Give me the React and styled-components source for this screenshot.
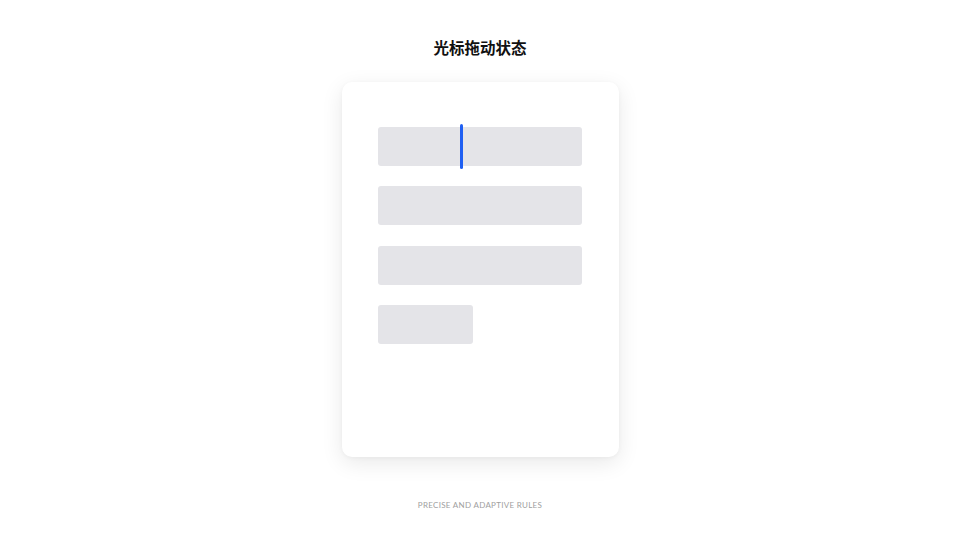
import React from "react";
import styled, { createGlobalStyle } from "styled-components";

const GlobalStyle = createGlobalStyle`
  html, body {
    margin: 0;
    padding: 0;
    background: #ffffff;
  }
  body {
    font-family: "Noto Sans", "Noto Sans CJK SC", sans-serif;
  }
`;

const Page = styled.div`
  width: 960px;
  height: 540px;
  display: flex;
  flex-direction: column;
  align-items: center;
  box-sizing: border-box;
  padding-top: 36px;
`;

const Title = styled.h1`
  margin: 0;
  height: 22px;
  line-height: 22px;
  font-size: 15.5px;
  font-weight: 700;
  color: #111111;
  font-family: "Noto Sans CJK SC", sans-serif;
`;

const Card = styled.div`
  margin-top: 24px;
  width: 277px;
  height: 375px;
  box-sizing: border-box;
  padding: 45px 37px 0 36px;
  background: #ffffff;
  border-radius: 10px;
  box-shadow: 0 6px 22px rgba(0, 0, 0, 0.09), 0 1px 4px rgba(0, 0, 0, 0.04);
  display: flex;
  flex-direction: column;
  gap: 20.4px;
`;

const Field = styled.div`
  position: relative;
  flex-shrink: 0;
  width: ${(p) => p.$width}px;
  height: 39px;
  border-radius: 3px;
  background: #e4e4e8;
`;

const Cursor = styled.span`
  position: absolute;
  left: 82px;
  top: -3px;
  width: 3px;
  height: 45px;
  border-radius: 2px;
  background: #1f5ff2;
`;

const Footer = styled.p`
  margin: 43px 0 0;
  font-family: "Lato", "Liberation Sans", sans-serif;
  font-size: 8px;
  letter-spacing: 0.3px;
  color: #a0a0a0;
  line-height: 10px;
`;

export default function App() {
  return (
    <>
      <GlobalStyle />
      <Page>
        <Title>光标拖动状态</Title>
        <Card>
          <Field $width={204}>
            <Cursor />
          </Field>
          <Field $width={204} />
          <Field $width={204} />
          <Field $width={95} />
        </Card>
        <Footer>PRECISE AND ADAPTIVE RULES</Footer>
      </Page>
    </>
  );
}
